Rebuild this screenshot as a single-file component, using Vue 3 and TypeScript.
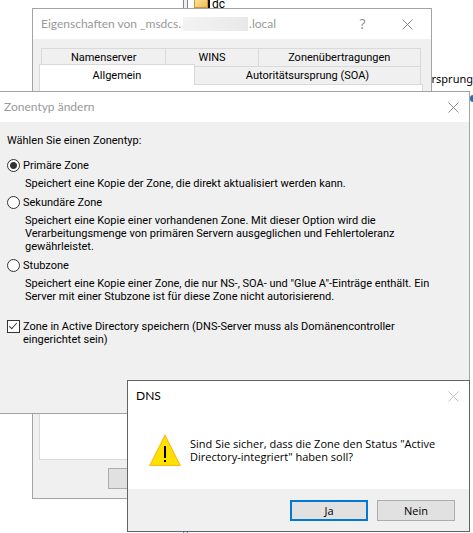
<script setup lang="ts">
import { ref } from 'vue'

interface ZoneType {
  id: string
  label: string
  lines: string[]
}

const zoneTypes: ZoneType[] = [
  {
    id: 'primary',
    label: 'Primäre Zone',
    lines: ['Speichert eine Kopie der Zone, die direkt aktualisiert werden kann.'],
  },
  {
    id: 'secondary',
    label: 'Sekundäre Zone',
    lines: [
      'Speichert eine Kopie einer vorhandenen Zone. Mit dieser Option wird die',
      'Verarbeitungsmenge von primären Servern ausgeglichen und Fehlertoleranz',
      'gewährleistet.',
    ],
  },
  {
    id: 'stub',
    label: 'Stubzone',
    lines: [
      'Speichert eine Kopie einer Zone, die nur NS-, SOA- und "Glue A"-Einträge enthält. Ein',
      'Server mit einer Stubzone ist für diese Zone nicht autorisierend.',
    ],
  },
]

const selected = ref('primary')
const storeInAd = ref(true)
</script>

<template>
  <div class="desktop">
    <div class="console">
      <div class="tree"></div>
      <div class="list">
        <div class="entry">
          <svg class="folder" width="16" height="16" viewBox="0 0 16 16" aria-hidden="true">
            <defs>
              <linearGradient id="folder-fill" x1="0" y1="0" x2="1" y2="1">
                <stop offset="0" stop-color="#ffeaa6" />
                <stop offset="1" stop-color="#efbd55" />
              </linearGradient>
            </defs>
            <path d="M2 0H16V14H2Z" fill="#111" />
            <path d="M0 0H14V13H0Z" fill="#c9983c" />
            <path d="M1 1H13V12H1Z" fill="url(#folder-fill)" />
          </svg>
          <span>dc</span>
        </div>
        <div class="column-text">ursprung</div>
        <div class="marker"></div>
      </div>
    </div>

    <section class="window properties" aria-labelledby="props-title">
      <header class="titlebar">
        <h2 id="props-title" class="title inactive">
          Eigenschaften von _msdcs.<span class="redacted"></span>.local
        </h2>
        <button class="caption help" type="button" aria-label="Hilfe">?</button>
        <button class="caption" type="button" aria-label="Schließen">
          <svg width="11" height="11" viewBox="0 0 11 11"><path d="M.5 .5L10.5 10.5M10.5 .5L.5 10.5" /></svg>
        </button>
      </header>
      <div class="props-body">
        <div class="tabs" role="tablist">
          <div class="tab-row back">
            <button class="tab" role="tab" type="button">Namenserver</button>
            <button class="tab" role="tab" type="button">WINS</button>
            <button class="tab" role="tab" type="button">Zonenübertragungen</button>
          </div>
          <div class="tab-row front">
            <button class="tab active" role="tab" type="button" aria-selected="true">Allgemein</button>
            <button class="tab" role="tab" type="button">Autoritätsursprung (SOA)</button>
          </div>
        </div>
        <div class="tab-page" role="tabpanel"></div>
        <div class="props-actions">
          <button class="push" type="button" aria-label="OK"></button>
        </div>
      </div>
    </section>

    <section class="window zone" aria-labelledby="zone-title">
      <header class="titlebar">
        <h2 id="zone-title" class="title inactive">Zonentyp ändern</h2>
        <button class="caption" type="button" aria-label="Schließen">
          <svg width="11" height="11" viewBox="0 0 11 11"><path d="M.5 .5L10.5 10.5M10.5 .5L.5 10.5" /></svg>
        </button>
      </header>
      <form class="zone-body" @submit.prevent>
        <fieldset class="choices">
          <legend>Wählen Sie einen Zonentyp:</legend>
          <div v-for="zone in zoneTypes" :key="zone.id" class="choice">
            <label class="option">
              <input v-model="selected" type="radio" name="zone-type" :value="zone.id" />
              <span>{{ zone.label }}</span>
            </label>
            <p class="description">
              <span v-for="line in zone.lines" :key="line">{{ line }}</span>
            </p>
          </div>
        </fieldset>
        <label class="option store">
          <input v-model="storeInAd" type="checkbox" />
          <span>Zone in Active Directory speichern (DNS-Server muss als Domänencontroller<br />eingerichtet sein)</span>
        </label>
      </form>
    </section>

    <section class="window message" role="alertdialog" aria-labelledby="dns-title">
      <header class="titlebar">
        <h2 id="dns-title" class="title">DNS</h2>
        <button class="caption faint" type="button" aria-label="Schließen">
          <svg width="11" height="11" viewBox="0 0 11 11"><path d="M.5 .5L10.5 10.5M10.5 .5L.5 10.5" /></svg>
        </button>
      </header>
      <div class="message-body">
        <svg class="warning" width="32" height="32" viewBox="0 0 32 32" aria-hidden="true">
          <path d="M16 0L32 32H0Z" fill="#fdb913" />
          <path d="M16 2.5L30.3 31H1.7Z" fill="#ffe100" />
          <path d="M15 12H17V24H15ZM15 26H17V28H15Z" fill="#000" />
        </svg>
        <p>Sind Sie sicher, dass die Zone den Status "Active<br />Directory-integriert" haben soll?</p>
      </div>
      <footer class="message-actions">
        <button class="push default" type="button">Ja</button>
        <button class="push" type="button">Nein</button>
      </footer>
    </section>
  </div>
</template>

<style>
body {
  margin: 0;
  background: #fff;
}
</style>

<style scoped>
.desktop {
  position: relative;
  min-height: 100vh;
  overflow: hidden;
  color: #000;
  font: 11px/13px Roboto, "Liberation Sans", sans-serif;
}

button {
  margin: 0;
  padding: 0;
  color: inherit;
  font: inherit;
}

.console {
  display: flex;
  min-height: 100vh;
}

.tree {
  flex: 0 0 183px;
  border-right: 1px solid #828790;
}

.list {
  flex: 1;
  margin-left: 3px;
  border-left: 1px solid #828790;
  box-shadow: -3px 0 #f0f0f0;
}

.entry {
  display: flex;
  align-items: center;
  gap: 2px;
  height: 16px;
  margin-top: -5px;
  padding-left: 6px;
  font-size: 12px;
}

.entry span {
  padding-top: 3px;
}

.column-text {
  padding-top: 61px;
  text-align: right;
  font: 11px/13px "Noto Sans", "Open Sans", sans-serif;
}

.marker {
  width: 3px;
  height: 7px;
  margin: 10px 0 0 auto;
  border-radius: 3px 0 0 3px;
  background: #2f6ea8;
}

.window {
  position: absolute;
  box-sizing: border-box;
  border: 1px solid #a3a3a3;
  background: #f0f0f0;
}

.properties {
  top: 8px;
  left: 32px;
  right: 41px;
}

.zone {
  top: 91px;
  left: -1px;
  right: 3px;
}

.message {
  top: 380px;
  left: 127px;
  right: 3px;
  border-color: #636363;
}

.titlebar {
  display: flex;
  align-items: center;
  height: 30px;
  padding: 0 10px 0 8px;
  background: #fff;
}

.zone .titlebar {
  padding-left: 4px;
}

.title {
  display: flex;
  flex: 1;
  align-items: center;
  margin: 0;
  font: 400 12px/16px Lato, "Open Sans", sans-serif;
  white-space: nowrap;
}

.title.inactive {
  color: #999;
}

.redacted {
  width: 65px;
  height: 14px;
  margin: 0 1px 0 2px;
  background: linear-gradient(90deg, #f3f3f3, #e9e9e9);
}

.caption {
  display: flex;
  align-items: center;
  justify-content: center;
  width: 11px;
  height: 28px;
  border: 0;
  background: none;
  color: #8a8a8a;
}

.caption path {
  fill: none;
  stroke: currentColor;
}

.caption.faint {
  color: #c4c4c4;
}

.properties .titlebar {
  padding-right: 18px;
}

.caption.help {
  margin-right: 34px;
  font: 14px/16px "Open Sans", sans-serif;
}

.props-body {
  padding: 9px 8px 9px 6px;
}

.tabs {
  margin: 0 2px;
}

.tab-row {
  display: grid;
}

.back {
  grid-template-columns: 125fr 92fr 162fr;
}

.front {
  grid-template-columns: 154fr 226fr;
}

.tab {
  height: 18px;
  border: solid #d9d9d9;
  border-width: 1px 1px 0 0;
  background: #f0f0f0;
}

.back .tab:first-child {
  border-left-width: 1px;
}

.tab.active {
  position: relative;
  height: 21px;
  margin: -2px 0 -1px -2px;
  border-left-width: 1px;
  background: #fff;
}

.tab-page {
  height: 374px;
  border: 1px solid #d9d9d9;
  background: #fff;
}

.props-actions {
  display: flex;
  justify-content: flex-end;
  padding: 8px 237px 0 0;
}

.push {
  box-sizing: border-box;
  width: 78px;
  height: 21px;
  border: 1px solid #adadad;
  background: #e1e1e1;
}

.push.default {
  border: 2px solid #0078d7;
}

.zone-body {
  padding: 12px 7px 67px;
}

.choices {
  display: flex;
  flex-direction: column;
  gap: 6px;
  min-width: 0;
  margin: 0;
  padding: 0;
  border: 0;
}

.choices legend {
  margin-bottom: 12px;
  padding: 0;
}

.choice {
  display: flex;
  flex-direction: column;
  gap: 5px;
}

.option {
  display: flex;
  gap: 3px;
}

.option input {
  position: relative;
  flex: none;
  box-sizing: border-box;
  width: 13px;
  height: 13px;
  margin: 0;
  border: 1px solid #333;
  background: #fff;
  appearance: none;
}

.option input[type='radio'] {
  border-radius: 50%;
}

.option input[type='radio']:checked {
  background: radial-gradient(circle, #333 3px, #fff 4px);
}

.option input[type='checkbox']:checked::after {
  position: absolute;
  top: 0;
  left: 3px;
  width: 3px;
  height: 7px;
  border: solid #333;
  border-width: 0 1px 1px 0;
  content: '';
  transform: rotate(42deg);
}

.description {
  display: flex;
  flex-direction: column;
  margin: 0;
  padding-left: 18px;
  white-space: nowrap;
}

.store {
  margin-top: 17px;
}

.message-body {
  display: flex;
  align-items: center;
  gap: 9px;
  padding: 23px 21px;
  background: #fff;
  font-family: "Open Sans", "Noto Sans", sans-serif;
}

.message-body svg {
  flex: none;
}

.message-body p {
  margin: 0;
}

.message-actions {
  display: flex;
  justify-content: flex-end;
  gap: 9px;
  padding: 11px 14px 10px;
  font-family: "Open Sans", "Noto Sans", sans-serif;
}
</style>
